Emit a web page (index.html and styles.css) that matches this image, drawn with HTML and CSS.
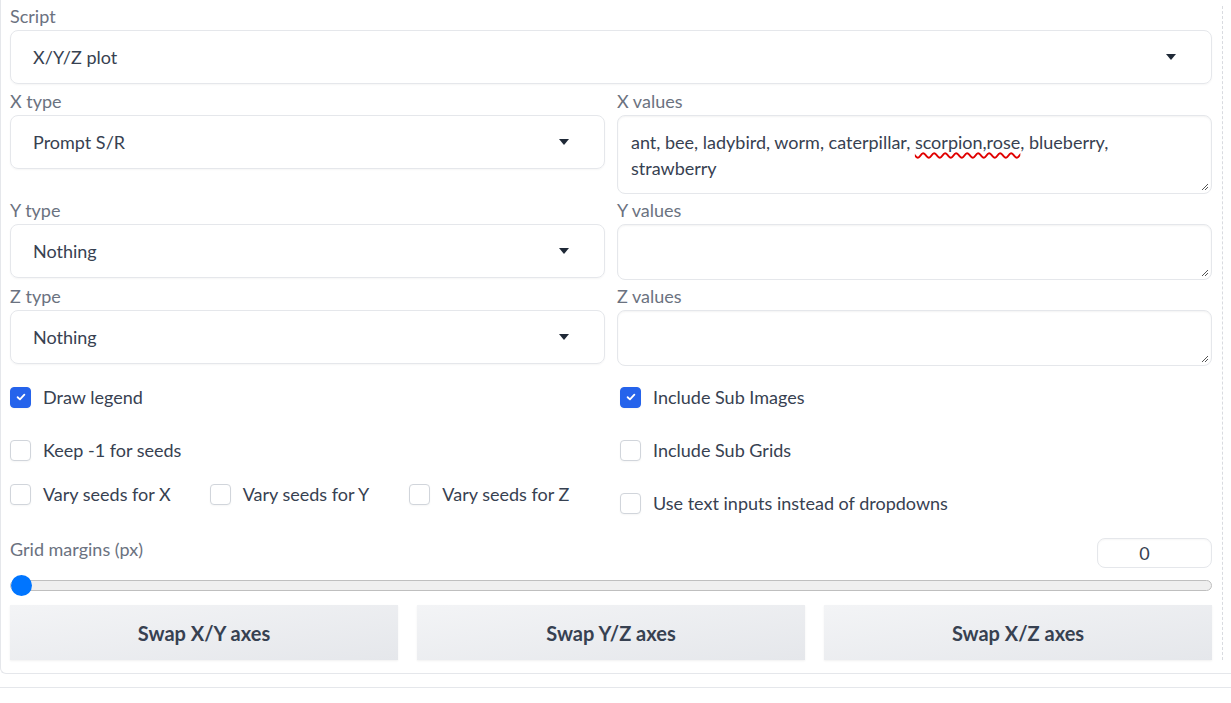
FILE: index.html
```html
<!DOCTYPE html>
<html>
<head>
<meta charset="utf-8">
<link rel="stylesheet" href="styles.css">
</head>
<body>
<div class="panel">
  <div class="col">
    <div class="block script-block">
      <div class="lbl">Script</div>
      <div class="select"><span>X/Y/Z plot</span><span class="caret"></span></div>
    </div>

    <div class="row first">
      <div class="block">
        <div class="lbl">X type</div>
        <div class="select"><span>Prompt S/R</span><span class="caret"></span></div>
      </div>
      <div class="block">
        <div class="lbl">X values</div>
        <div class="textarea tall"><span>ant, bee, ladybird, worm, caterpillar,</span> <span class="spell">scorpion,rose</span><span>, blueberry,</span> <span>strawberry</span><svg class="grip" viewBox="0 0 8 8" width="8" height="8"><path d="M7 1 L1 7 M7 4 L4 7" stroke="#555" stroke-width="1"/></svg></div>
      </div>
    </div>

    <div class="row">
      <div class="block">
        <div class="lbl">Y type</div>
        <div class="select"><span>Nothing</span><span class="caret"></span></div>
      </div>
      <div class="block">
        <div class="lbl">Y values</div>
        <div class="textarea"><svg class="grip" viewBox="0 0 8 8" width="8" height="8"><path d="M7 1 L1 7 M7 4 L4 7" stroke="#555" stroke-width="1"/></svg></div>
      </div>
    </div>

    <div class="row">
      <div class="block">
        <div class="lbl">Z type</div>
        <div class="select"><span>Nothing</span><span class="caret"></span></div>
      </div>
      <div class="block">
        <div class="lbl">Z values</div>
        <div class="textarea"><svg class="grip" viewBox="0 0 8 8" width="8" height="8"><path d="M7 1 L1 7 M7 4 L4 7" stroke="#555" stroke-width="1"/></svg></div>
      </div>
    </div>

    <div class="row checks">
      <div class="checkcol">
        <label class="check"><span class="box on"><svg viewBox="0 0 16 16" width="12" height="12"><path d="M3.5 8.3 L6.6 11.2 L12.5 4.8" fill="none" stroke="#fff" stroke-width="2.4" stroke-linecap="round" stroke-linejoin="round"/></svg></span>Draw legend</label>
        <label class="check"><span class="box"></span>Keep -1 for seeds</label>
        <div class="vary">
          <label class="check"><span class="box"></span>Vary seeds for X</label>
          <label class="check"><span class="box"></span>Vary seeds for Y</label>
          <label class="check"><span class="box"></span>Vary seeds for Z</label>
        </div>
      </div>
      <div class="checkcol right">
        <label class="check"><span class="box on"><svg viewBox="0 0 16 16" width="12" height="12"><path d="M3.5 8.3 L6.6 11.2 L12.5 4.8" fill="none" stroke="#fff" stroke-width="2.4" stroke-linecap="round" stroke-linejoin="round"/></svg></span>Include Sub Images</label>
        <label class="check"><span class="box"></span>Include Sub Grids</label>
        <label class="check"><span class="box"></span>Use text inputs instead of dropdowns</label>
      </div>
    </div>

    <div class="slider-block">
      <div class="slider-head">
        <div class="lbl">Grid margins (px)</div>
        <div class="num">0</div>
      </div>
      <div class="track"><span class="thumb"></span></div>
    </div>

    <div class="buttons">
      <button class="btn">Swap X/Y axes</button>
      <button class="btn">Swap Y/Z axes</button>
      <button class="btn">Swap X/Z axes</button>
    </div>
  </div>
</div>
<div class="footer-line"></div>
</body>
</html>
```
FILE: styles.css
```css
html, body {
  margin: 0;
  padding: 0;
  background: #fff;
}
body {
  font-family: "Source Sans Pro", Lato, "Liberation Sans", sans-serif;
  color: #374151;
  font-size: 18px;
}
.panel {
  border: 1px solid #e5e7eb;
  border-top: none;
  border-right: none;
  border-bottom-left-radius: 6px;
  padding: 6px 8px 13px 9px;
}
.col {
  box-sizing: border-box;
  padding-right: 10px;
  border-right: 1px dashed #d9dbe0;
  display: flex;
  flex-direction: column;
}
.lbl {
  color: #6b7280;
  font-size: 18px;
  line-height: 20px;
  height: 22px;
  margin-bottom: 2px;
}
.row {
  display: grid;
  grid-template-columns: 1fr 1fr;
  column-gap: 12px;
  align-items: start;
  margin-top: 6px;
}
.row.first { margin-top: 7px; }
.select {
  box-sizing: border-box;
  height: 54px;
  border: 1px solid #e5e7eb;
  border-radius: 8px;
  box-shadow: 0 1px 2px rgba(0,0,0,0.04);
  display: flex;
  align-items: center;
  justify-content: space-between;
  padding: 0 35px 0 22px;
  color: #374151;
}
.caret {
  width: 0;
  height: 0;
  border-left: 5.5px solid transparent;
  border-right: 5.5px solid transparent;
  border-top: 6px solid #1f2937;
}
.textarea {
  position: relative;
  box-sizing: border-box;
  min-height: 56px;
  border: 1px solid #e5e7eb;
  border-radius: 8px;
  box-shadow: inset 0 1px 2px rgba(0,0,0,0.05);
  padding: 13px 26px 12px 13px;
  line-height: 26px;
  color: #374151;
}
.textarea.tall { height: 79px; }
.spell {
  text-decoration: underline wavy #e00000;
  text-decoration-thickness: 1.5px;
  text-underline-offset: 3px;
}
.grip {
  position: absolute;
  right: 2px;
  bottom: 2px;
}
.checks {
  margin-top: 21px;
}
.checkcol {
  display: flex;
  flex-direction: column;
  gap: 33px;
}
.checkcol.right { padding-left: 3px; }
.check {
  display: flex;
  align-items: center;
  height: 20px;
  line-height: 20px;
  color: #374151;
  white-space: nowrap;
}
.box {
  box-sizing: border-box;
  width: 21px;
  height: 21px;
  flex: none;
  border: 1px solid #d1d5db;
  border-radius: 4px;
  background: #fff;
  margin-right: 12px;
  display: flex;
  align-items: center;
  justify-content: center;
  box-shadow: 0 1px 2px rgba(0,0,0,0.04);
}
.box.on {
  background: #2563eb;
  border-color: #2563eb;
}
.vary {
  display: grid;
  grid-template-columns: repeat(3, 1fr);
  column-gap: 4px;
  margin-top: -9px;
}
.slider-block {
  margin-top: 25px;
}
.slider-head {
  display: flex;
  justify-content: space-between;
  align-items: flex-start;
}
.slider-head .lbl { margin-top: 1px; }
.num {
  box-sizing: border-box;
  width: 115px;
  height: 30px;
  border: 1px solid #e5e7eb;
  border-radius: 8px;
  display: flex;
  align-items: center;
  justify-content: center;
  padding-right: 20px;
  color: #374151;
  box-shadow: inset 0 1px 2px rgba(0,0,0,0.04);
}
.track {
  position: relative;
  box-sizing: border-box;
  margin-top: 12px;
  height: 11px;
  border: 1px solid #bfbfbf;
  border-radius: 6px;
  background: #efefef;
}
.thumb {
  position: absolute;
  left: 0;
  top: -6px;
  width: 21px;
  height: 21px;
  border-radius: 50%;
  background: #0075ff;
}
.buttons {
  display: grid;
  grid-template-columns: repeat(3, 1fr);
  column-gap: 19px;
  margin-top: 14px;
}
.btn {
  height: 55px;
  border: none;
  border-radius: 0;
  background: linear-gradient(to bottom right, #f3f4f6, #e5e7eb);
  box-shadow: 0 1px 2px rgba(0,0,0,0.06);
  font-family: inherit;
  font-size: 20px;
  font-weight: 700;
  color: #374151;
  padding: 0;
}
.footer-line {
  margin-top: 13px;
  border-top: 1px solid #e5e7eb;
}
```
